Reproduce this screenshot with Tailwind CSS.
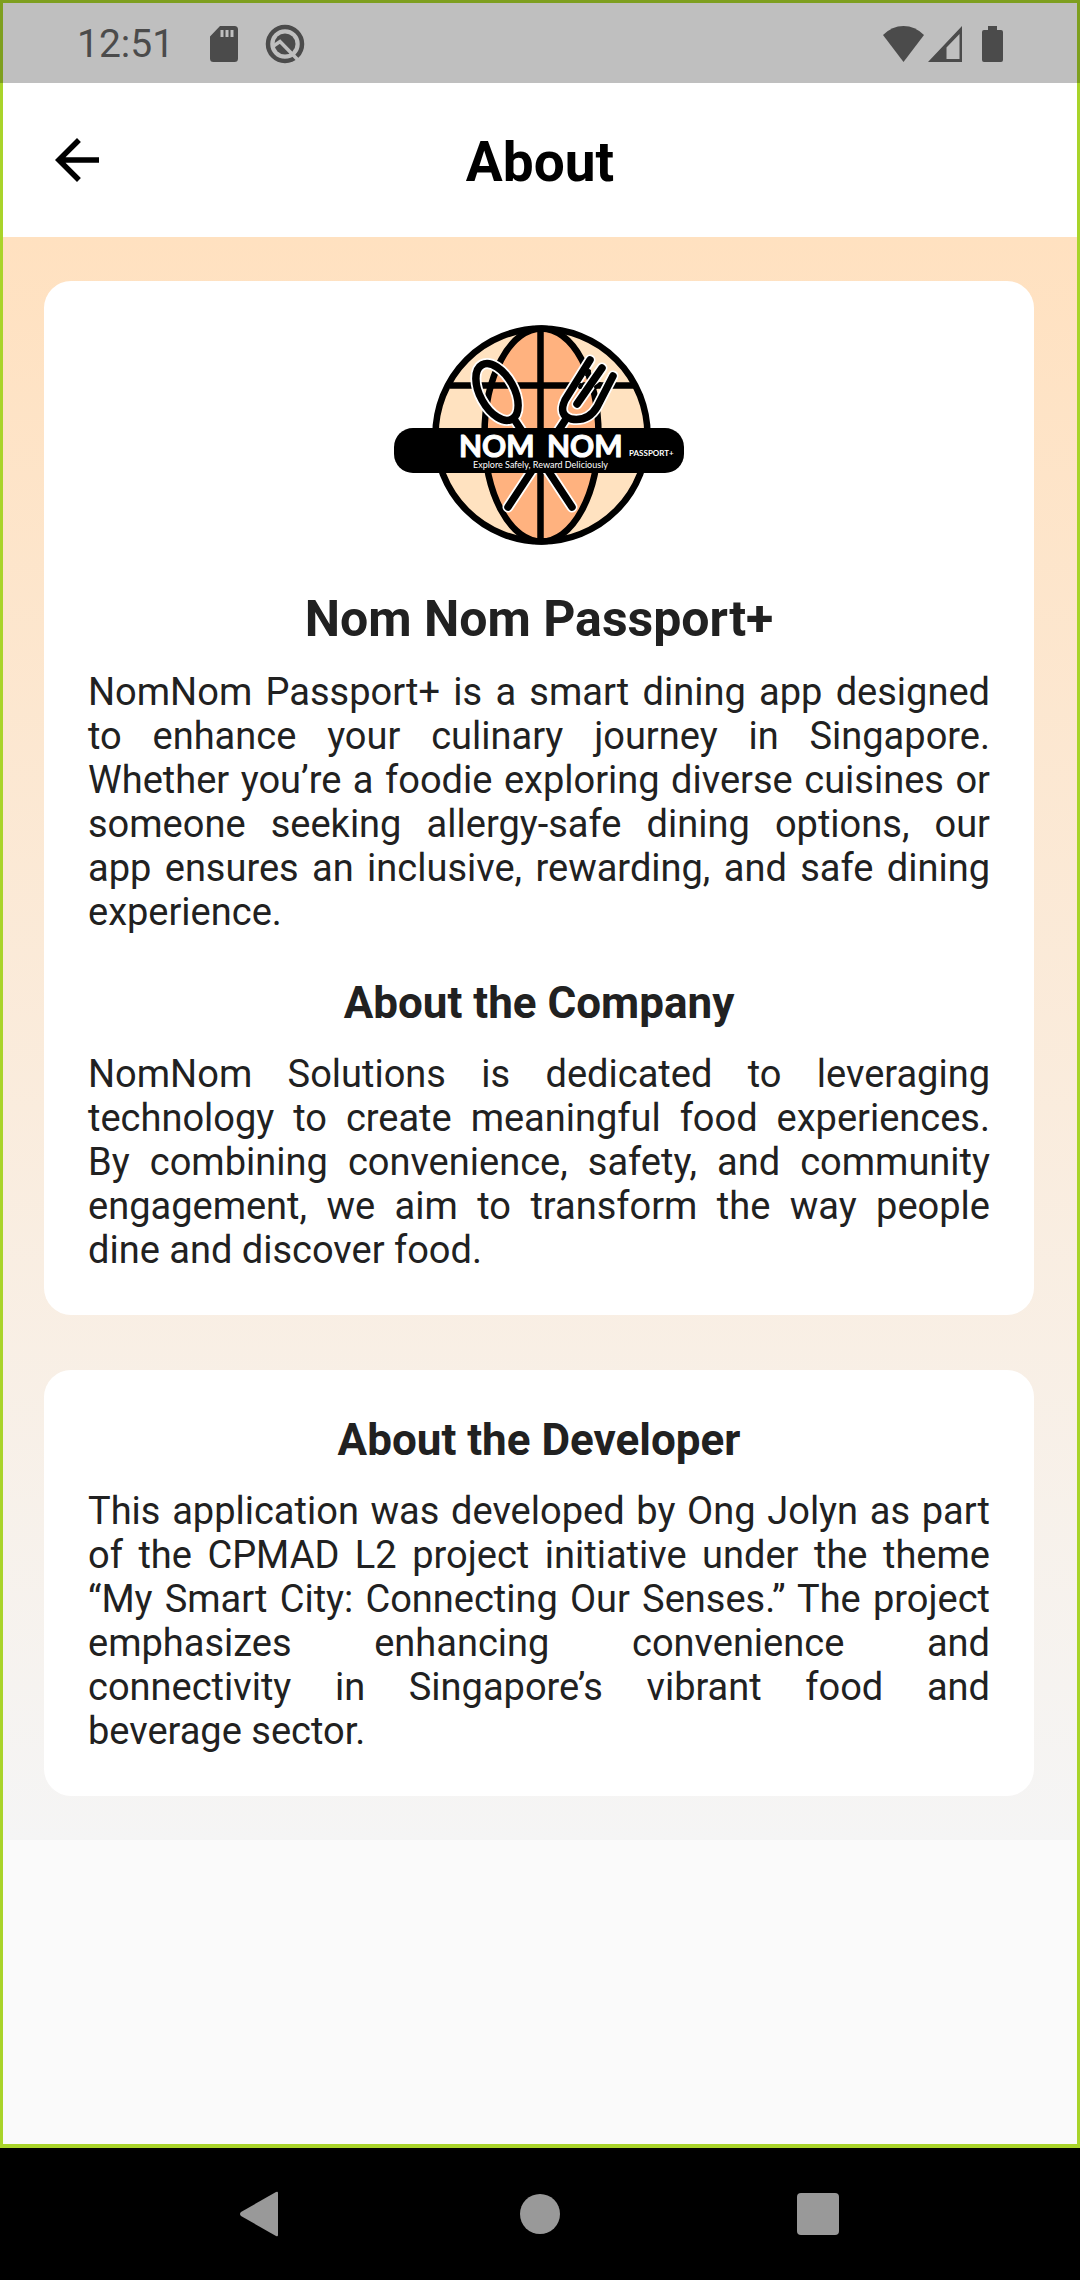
<!DOCTYPE html>
<html lang="en">
<head>
<meta charset="utf-8">
<meta name="viewport" content="width=device-width, initial-scale=1">
<title>About</title>
<script src="https://cdn.jsdelivr.net/npm/@tailwindcss/browser@4"></script>
</head>
<body class="font-['Roboto',sans-serif] bg-black">
<div class="min-h-screen flex flex-col">
  <div class="relative grow flex flex-col bg-[#fafafa]">
    <div class="absolute inset-0 border-x-[3px] border-t-[3px] border-b-4 border-[#a9d42a] pointer-events-none z-10"></div>

    <!-- Status bar -->
    <div class="bg-white shrink-0">
      <div class="relative z-20 h-[83px] bg-black/25 flex items-center justify-between px-[77px] text-[#4b4b4b]">
        <div class="flex items-center">
          <span class="text-[39px] leading-[48px] pt-1">12:51</span>
          <svg class="w-[28px] h-[36px] ml-[36px] mt-1" viewBox="0 0 28 36" fill="currentColor"><path fill-rule="evenodd" d="M10 0H24.500Q28 0 28 3.500V32.500Q28 36 24.500 36H3.500Q0 36 0 32.500V10.500ZM10.500 4V11H13.500V4ZM15.500 4V11H18.500V4ZM20.500 4V11H23.500V4Z"/></svg>
          <svg class="w-[40px] h-[40px] ml-[27px] mt-1" viewBox="0 0 40 40"><circle cx="20" cy="20" r="17" fill="none" stroke="currentColor" stroke-width="4.500"/><circle cx="20" cy="20" r="10.500" fill="currentColor"/><path d="M7 23L15 17.500L34 37" fill="none" stroke="#bfbfbf" stroke-width="3.500"/></svg>
        </div>
        <div class="flex items-center mt-1">
          <svg class="w-[41px] h-[36px]" viewBox="0 0 41 36" fill="currentColor"><path d="M0 9Q9 0 20.500 0Q32 0 41 9L20.500 36Z"/></svg>
          <svg class="w-[34px] h-[36px] ml-1" viewBox="0 0 34 36" fill="currentColor"><path fill-rule="evenodd" d="M34 0V36H0ZM31.500 8L18.500 21.500V33H31.500Z"/></svg>
          <svg class="w-[21px] h-[36px] ml-5" viewBox="0 0 21 36" fill="currentColor"><path d="M6 0H15V4H19Q21 4 21 6V34Q21 36 19 36H2Q0 36 0 34V6Q0 4 2 4H6Z"/></svg>
        </div>
      </div>
    </div>

    <!-- App bar -->
    <header class="h-[154px] shrink-0 bg-white grid grid-cols-[1fr_auto_1fr] items-center px-11 text-black">
      <button type="button" aria-label="Back" class="justify-self-start">
        <svg class="w-[66px] h-[66px]" viewBox="0 0 24 24" fill="currentColor"><path d="M20 11H7.830l5.590-5.590L12 4l-8 8 8 8 1.410-1.410L7.830 13H20v-2z"/></svg>
      </button>
      <h1 class="pt-[3px] text-[55px] leading-[64px] font-bold">About</h1>
    </header>

    <!-- Content -->
    <main class="flex flex-col gap-[55px] py-11 pl-11 pr-[46px] bg-linear-to-b from-[#ffe1c0] to-[#f5f5f5] text-[#212121]">
      <section class="bg-white rounded-[27px] px-11 pt-11 pb-[43px]">
        <svg class="block mx-auto w-[290px] h-[220px]" viewBox="0 0 290 220" role="img" aria-label="Nom Nom Passport+ logo">
          <ellipse cx="147.500" cy="110" rx="106" ry="107" fill="#ffe2c0"/>
          <ellipse cx="147.500" cy="110" rx="57" ry="107" fill="#ffb27f"/>
          <g fill="none" stroke="#000" stroke-width="6.500">
            <ellipse cx="147.500" cy="110" rx="106" ry="106.500"/>
            <ellipse cx="147.500" cy="110" rx="57" ry="106.500"/>
            <path d="M146.500 4V216M56 60.500H240"/>
          </g>
          <g fill="none" stroke-linecap="round" stroke-linejoin="round">
            <g stroke="#fff" stroke-width="11">
              <path d="M120 94L178 182M172 94L114 182"/>
              <ellipse cx="103" cy="67" rx="17" ry="31" transform="rotate(-29 103 67)"/>
              <path d="M196 35L171 75Q164 90 177 94Q194 97 203 82L219 51M208 43L183 79"/>
            </g>
            <g stroke="#000" stroke-width="7.500">
              <path d="M120 94L178 182M172 94L114 182"/>
              <ellipse cx="103" cy="67" rx="17" ry="31" transform="rotate(-29 103 67)"/>
              <path d="M196 35L171 75Q164 90 177 94Q194 97 203 82L219 51M208 43L183 79"/>
            </g>
            <path d="M195 46L193 50M206 59L202 62M187 60L186 62" stroke="#000" stroke-width="4"/>
          </g>
          <rect x="0" y="103" width="290" height="45" rx="19"/>
          <g fill="#fff" font-family="Lato, sans-serif">
            <g font-size="30" font-weight="bold" stroke="#fff" stroke-linejoin="round">
              <text x="65" y="132">NOM</text>
              <text x="153" y="132">NOM</text>
            </g>
            <text x="235" y="131" font-size="8" font-weight="bold">PASSPORT+</text>
            <text x="79" y="143" font-size="9">Explore Safely, Reward Deliciously</text>
          </g>
        </svg>
        <h2 class="mt-[45px] text-[50px] leading-[58px] font-bold text-center">Nom Nom Passport+</h2>
        <p class="mt-[22px] text-[38px] leading-[44px] text-justify">NomNom Passport+ is a smart dining app designed to enhance your culinary journey in Singapore. Whether you’re a foodie exploring diverse cuisines or someone seeking allergy-safe dining options, our app&nbsp;ensures an inclusive, rewarding, and safe dining experience.</p>
        <h2 class="mt-[43px] text-[44px] leading-[52px] font-bold text-center">About the Company</h2>
        <p class="mt-[23px] text-[38px] leading-[44px] text-justify">NomNom Solutions is dedicated to leveraging technology to create meaningful food experiences. By combining convenience, safety, and community engagement, we aim to transform the way people dine and discover food.</p>
      </section>
      <section class="bg-white rounded-[27px] px-11 pt-11 pb-[43px]">
        <h2 class="text-[44px] leading-[52px] font-bold text-center">About the Developer</h2>
        <p class="mt-[23px] text-[38px] leading-[44px] text-justify">This application was developed by Ong Jolyn as part of the CPMAD L2 project initiative under the theme “My Smart City: Connecting Our Senses.” The project emphasizes enhancing convenience and connectivity&nbsp;in Singapore’s vibrant food and beverage&nbsp;sector.</p>
      </section>
    </main>
  </div>

  <!-- System navigation -->
  <nav class="h-[132px] shrink-0 bg-black flex items-center justify-center gap-[237px] pr-[2px] text-[#999999]" aria-label="System">
    <button type="button" aria-label="Back"><svg class="w-[44px] h-[46px]" viewBox="0 0 44 46" fill="currentColor"><path d="M37 1Q39 0 39 2V44Q39 46 37 45L2 25Q0 23 2 21Z"/></svg></button>
    <button type="button" aria-label="Home" class="w-10 h-10 rounded-full bg-[#999999]"></button>
    <button type="button" aria-label="Recent apps" class="w-[42px] h-[42px] rounded-[4px] bg-[#999999]"></button>
  </nav>
</div>
</body>
</html>
